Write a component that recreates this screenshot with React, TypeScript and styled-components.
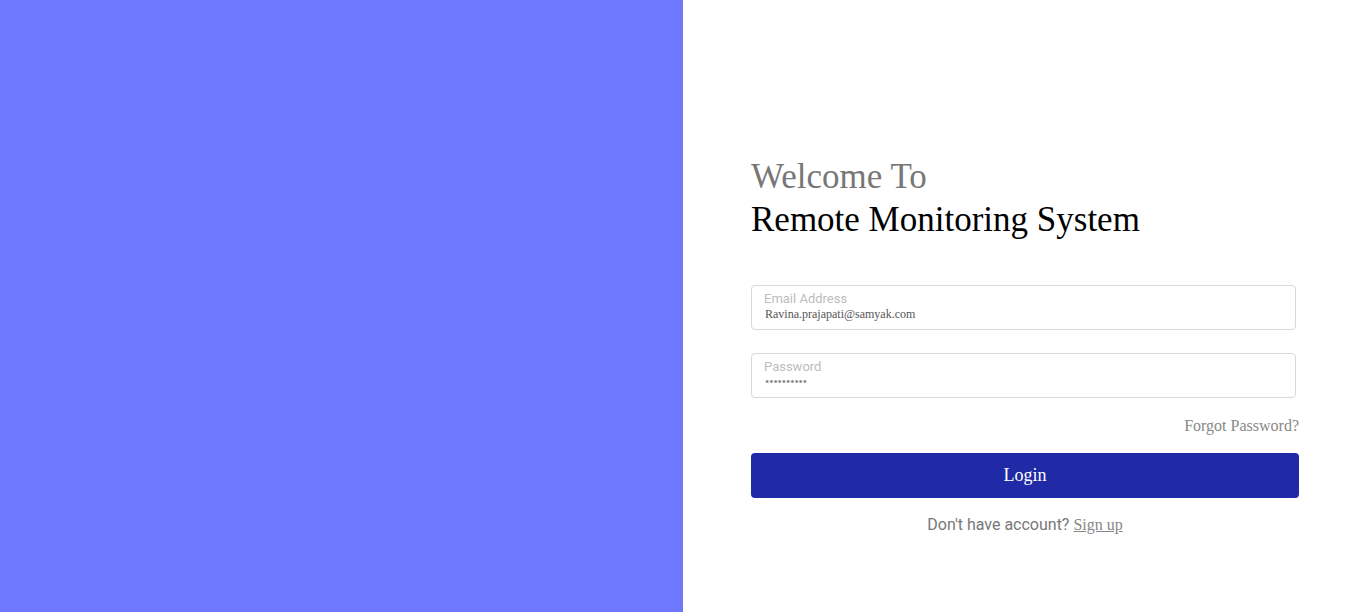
import React from "react";
import styled, { createGlobalStyle } from "styled-components";

const Global = createGlobalStyle`
  html, body { margin: 0; padding: 0; }
  body { font-family: "Liberation Serif", serif; background: #fff; }
`;

const Page = styled.div`
  display: grid;
  grid-template-columns: 683px 1fr;
  height: 612px;
`;

const SidePanel = styled.div`
  background: #6d78fe;
`;

const FormSide = styled.div`
  display: flex;
  flex-direction: column;
  padding: 155px 67px 0 68px;
`;

const Heading = styled.h1`
  margin: 0;
  font-family: "Liberation Serif", serif;
  font-weight: 400;
  font-size: 35px;
  line-height: 43px;
  color: #000;
`;

const SubTitle = styled.span`
  display: block;
  color: #777;
`;

const Form = styled.form`
  display: flex;
  flex-direction: column;
  margin-top: 44px;
`;

const Field = styled.label<{ $mb?: number }>`
  display: flex;
  flex-direction: column;
  width: 545px;
  height: 45px;
  box-sizing: border-box;
  border: 1px solid #d9d9d9;
  border-radius: 4px;
  padding: 6px 12px 0 12px;
  margin-bottom: ${(p) => p.$mb ?? 23}px;
`;

const FieldLabel = styled.span`
  font-family: Roboto, sans-serif;
  font-size: 13px;
  line-height: 14px;
  color: #bdbdbd;
`;

const FieldInput = styled.input<{ $muted?: boolean }>`
  border: none;
  outline: none;
  padding: 0 1px;
  margin: 1px 0 0 0;
  font-family: "Liberation Serif", serif;
  font-size: 12px;
  line-height: 14px;
  height: 15px;
  color: ${(p) => (p.$muted ? "#8a8a8a" : "#555")};
  background: transparent;
`;

const ForgotRow = styled.div`
  display: flex;
  justify-content: flex-end;
  margin-top: 19px;
  width: 548px;
`;

const ForgotLink = styled.a`
  font-family: "Liberation Serif", serif;
  font-size: 16px;
  color: #888;
  text-decoration: none;
`;

const LoginButton = styled.button`
  margin-top: 18px;
  width: 548px;
  height: 45px;
  border: none;
  border-radius: 4px;
  background: #202aa6;
  color: #fff;
  font-family: "Liberation Serif", serif;
  font-size: 18px;
`;

const SignupRow = styled.div`
  width: 548px;
  text-align: center;
  margin-top: 17px;
  font-family: Roboto, sans-serif;
  font-size: 16px;
  color: #777;
`;

const SignupLink = styled.a`
  font-family: "Liberation Serif", serif;
  font-size: 16px;
  color: #888;
  text-decoration: underline;
`;

export default function App() {
  return (
    <>
      <Global />
      <Page>
        <SidePanel />
        <FormSide>
          <Heading>
            <SubTitle>Welcome To</SubTitle>
            Remote Monitoring System
          </Heading>
          <Form onSubmit={(e) => e.preventDefault()}>
            <Field>
              <FieldLabel>Email Address</FieldLabel>
              <FieldInput type="text" defaultValue="Ravina.prajapati@samyak.com" />
            </Field>
            <Field $mb={0}>
              <FieldLabel>Password</FieldLabel>
              <FieldInput $muted type="password" defaultValue="1234567890" />
            </Field>
            <ForgotRow>
              <ForgotLink href="#">Forgot Password?</ForgotLink>
            </ForgotRow>
            <LoginButton type="submit">Login</LoginButton>
            <SignupRow>
              Don't have account? <SignupLink href="#">Sign up</SignupLink>
            </SignupRow>
          </Form>
        </FormSide>
      </Page>
    </>
  );
}
